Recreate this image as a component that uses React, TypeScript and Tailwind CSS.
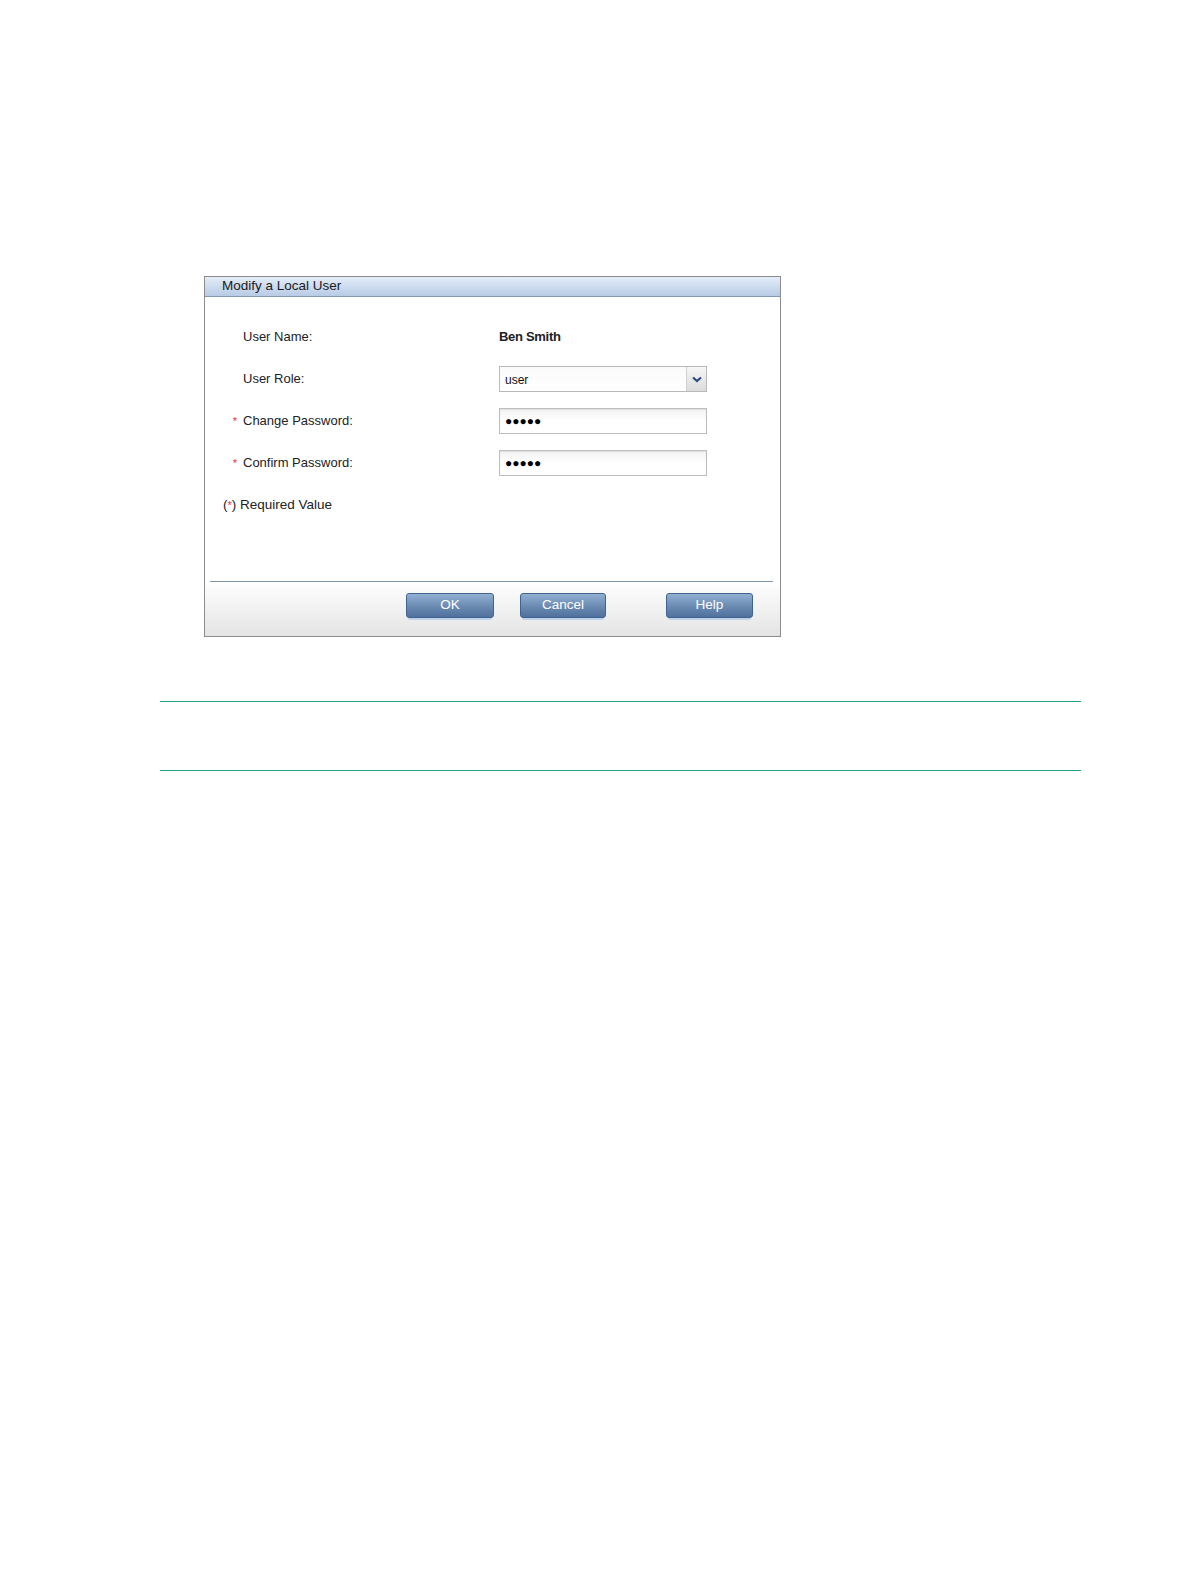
const font = { fontFamily: '"Liberation Sans", Arial, sans-serif' };

type Row = {
  label: string;
  required?: boolean;
  kind: "text" | "select" | "password";
  value: string;
};

const rows: Row[] = [
  { label: "User Name:", kind: "text", value: "Ben Smith" },
  { label: "User Role:", kind: "select", value: "user" },
  { label: "Change Password:", required: true, kind: "password", value: "●●●●●" },
  { label: "Confirm Password:", required: true, kind: "password", value: "●●●●●" },
];

function Field({ row }: { row: Row }) {
  if (row.kind === "text") {
    return <span className="text-[13px] font-bold tracking-[-0.3px] text-[#222]">{row.value}</span>;
  }
  if (row.kind === "select") {
    return (
      <div className="flex h-[26px] w-[208px] border border-[#b9b9b9] bg-gradient-to-b from-[#fafafa] to-white">
        <span className="flex flex-1 items-center pl-[5px] pt-[2px] text-[12px] text-[#111]">{row.value}</span>
        <div className="flex w-[20px] items-center justify-center border-l border-[#cfcfcf] bg-gradient-to-b from-[#f6f6f6] to-[#dcdcdc]">
          <svg width="10" height="7" viewBox="0 0 10 7">
            <path d="M1 1.5 L5 5 L9 1.5" fill="none" stroke="#2b4a86" strokeWidth="2.2" />
          </svg>
        </div>
      </div>
    );
  }
  return (
    <div className="flex h-[26px] w-[208px] items-center border border-[#bdbdbd] bg-gradient-to-b from-[#f2f2f2] via-white to-white pl-[5px] shadow-[inset_0_1px_1px_rgba(0,0,0,0.08)]">
      <span className="text-[12px] leading-none text-black">{row.value}</span>
    </div>
  );
}

function DialogButton({ label, className }: { label: string; className: string }) {
  return (
    <div className={`flex flex-col ${className}`}>
      <div className="flex h-[25px] items-center justify-center rounded-[3px] border border-[#40628e] bg-gradient-to-b from-[#93b0d2] via-[#6d8db4] to-[#4f719c] text-[13.5px] text-white">
        {label}
      </div>
      <div className="mx-[2px] h-[2px] rounded-b bg-[#bcd3ea]" />
    </div>
  );
}

export default function App() {
  return (
    <div className="h-screen w-full overflow-hidden bg-white" style={font}>
      <div className="pl-[204px] pt-[276px]">
        <div className="flex h-[361px] w-[577px] flex-col border border-[#8c8c8c] bg-white">
          <div className="flex h-[20px] shrink-0 items-center border-b border-[#8398b6] bg-gradient-to-b from-[#e4edf8] to-[#b7cbe5] pl-[17px] text-[13.5px] text-[#1a1a1a]">
            Modify a Local User
          </div>

          <div className="flex flex-1 flex-col pt-[19px]">
            {rows.map((row) => (
              <div key={row.label} className="flex h-[42px] items-center text-[13px] text-[#222]">
                <span className="flex w-[38px] justify-end pr-[6px] text-[11px] text-[#e3323e]">
                  {row.required ? "*" : ""}
                </span>
                <span className="w-[256px]">{row.label}</span>
                <Field row={row} />
              </div>
            ))}
            <div className="flex h-[42px] items-center text-[13.5px] text-[#222]">
              <span className="pl-[18px]">
                (<span className="text-[11px] text-[#e3323e]">*</span>) Required Value
              </span>
            </div>
          </div>

          <div className="ml-[5px] mr-[7px] border-t border-[#7f95b0]" />
          <div className="flex h-[54px] shrink-0 items-start bg-gradient-to-b from-white to-[#e4e4e4] pt-[11px]">
            <DialogButton label="OK" className="ml-[201px] w-[88px]" />
            <DialogButton label="Cancel" className="ml-[26px] w-[86px]" />
            <DialogButton label="Help" className="ml-[60px] w-[87px]" />
          </div>
        </div>
      </div>

      <div className="ml-[160px] mt-[64px] w-[921px]">
        <div className="h-[69px] border-t border-[#22a38b]" />
        <div className="border-t border-[#22a38b]" />
      </div>
    </div>
  );
}
